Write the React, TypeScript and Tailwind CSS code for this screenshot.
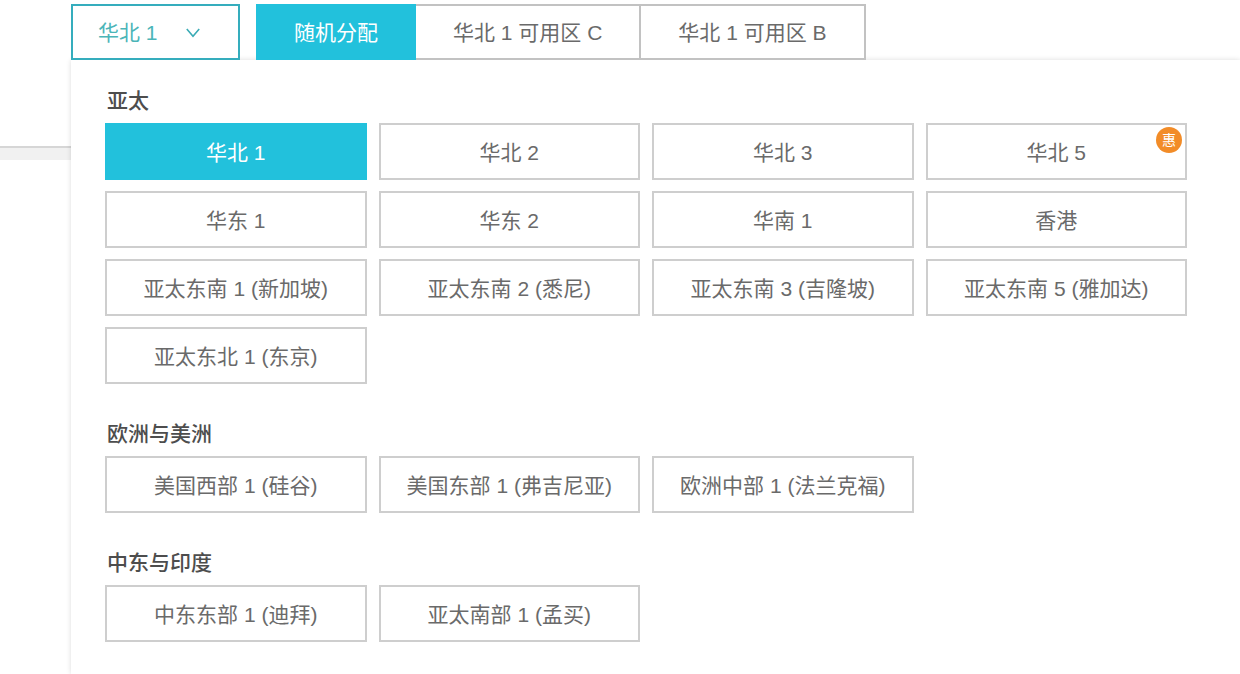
import { useState } from 'react'

type Region = { name: string; sale?: boolean }

const zones = ['随机分配', '华北 1 可用区 C', '华北 1 可用区 B']

const groups: { title: string; regions: Region[] }[] = [
  {
    title: '亚太',
    regions: [
      { name: '华北 1' },
      { name: '华北 2' },
      { name: '华北 3' },
      { name: '华北 5', sale: true },
      { name: '华东 1' },
      { name: '华东 2' },
      { name: '华南 1' },
      { name: '香港' },
      { name: '亚太东南 1 (新加坡)' },
      { name: '亚太东南 2 (悉尼)' },
      { name: '亚太东南 3 (吉隆坡)' },
      { name: '亚太东南 5 (雅加达)' },
      { name: '亚太东北 1 (东京)' },
    ],
  },
  {
    title: '欧洲与美洲',
    regions: [
      { name: '美国西部 1 (硅谷)' },
      { name: '美国东部 1 (弗吉尼亚)' },
      { name: '欧洲中部 1 (法兰克福)' },
    ],
  },
  {
    title: '中东与印度',
    regions: [{ name: '中东东部 1 (迪拜)' }, { name: '亚太南部 1 (孟买)' }],
  },
]

function RegionButton({ region, active, onClick }: { region: Region; active: boolean; onClick: () => void }) {
  return (
    <button
      type="button"
      aria-pressed={active}
      onClick={onClick}
      className={`relative h-[57px] border-2 pt-0.5 ${
        active ? 'border-[#22c1dc] bg-[#22c1dc] text-white' : 'border-[#cecece] bg-white hover:border-[#22c1dc]'
      }`}
    >
      {region.name}
      {region.sale && (
        <span className="absolute top-0.5 right-[3px] flex size-[26px] items-center justify-center rounded-full bg-[#f28c28] text-[14px] leading-none text-white">
          惠
        </span>
      )}
    </button>
  )
}

export default function App() {
  const [open, setOpen] = useState(true)
  const [region, setRegion] = useState('华北 1')
  const [zone, setZone] = useState(zones[0])

  return (
    <main className="min-h-screen overflow-hidden bg-white font-['Liberation_Sans','Noto_Sans_CJK_SC',sans-serif] text-[21px] leading-7 text-[#6a6a6a]">
      <section className="h-[148px] border-b-2 border-[#d6d6d6] pt-1 pl-[71px]">
        <div className="relative">
          {/* Region and zone */}
          <div className="relative z-10 flex gap-4">
            <button
              type="button"
              aria-expanded={open}
              onClick={() => setOpen(!open)}
              className="flex h-14 w-[169px] items-center gap-7 border-2 border-[#35adbd] bg-white pt-0.5 pl-[25px] text-[#4bb5b8]"
            >
              {region}
              <svg viewBox="0 0 14 10" className="h-[10px] w-[14px]" fill="none" stroke="#3aabb5" strokeWidth="1.6">
                <path d="M0.8 1L7 8.2L13.2 1" />
              </svg>
            </button>

            <div className="flex">
              {zones.map((z) => (
                <button
                  key={z}
                  type="button"
                  aria-pressed={z === zone}
                  onClick={() => setZone(z)}
                  className={`h-14 border-2 px-[37px] pt-0.5 not-first:-ml-0.5 first:px-9 ${
                    z === zone ? 'relative border-[#22c1dc] bg-[#22c1dc] text-white' : 'border-[#c2c2c2] bg-white'
                  }`}
                >
                  {z}
                </button>
              ))}
            </div>
          </div>

          {/* Region menu */}
          {open && (
            <div className="absolute top-full right-0 left-0 bg-white pt-[27px] pr-[53px] pb-8 pl-[34px] shadow-[0_0_5px_rgba(0,0,0,0.14)]">
              {groups.map((group) => (
                <div key={group.title} className="not-first:mt-9">
                  <h2 className="mb-2 pl-0.5 font-medium text-[#4d4d4d]">{group.title}</h2>
                  <div className="grid grid-cols-4 gap-x-3 gap-y-[11px]">
                    {group.regions.map((r) => (
                      <RegionButton
                        key={r.name}
                        region={r}
                        active={r.name === region}
                        onClick={() => setRegion(r.name)}
                      />
                    ))}
                  </div>
                </div>
              ))}
            </div>
          )}
        </div>
      </section>
      <div className="h-3 bg-[#f1f1f1]" />
    </main>
  )
}
